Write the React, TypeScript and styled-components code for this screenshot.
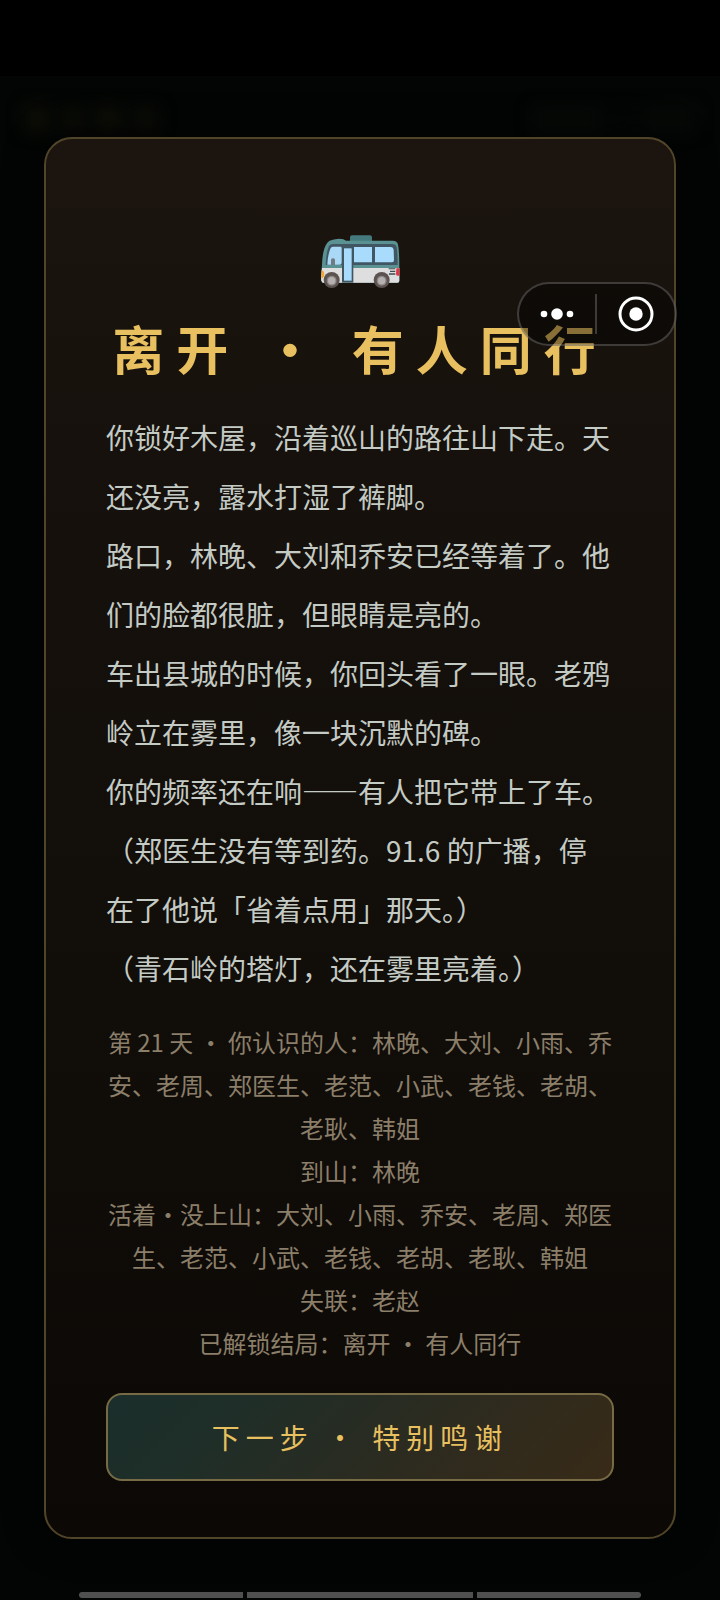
import React from 'react';
import styled, { createGlobalStyle } from 'styled-components';

const GlobalStyle = createGlobalStyle`
  *, *::before, *::after { box-sizing: border-box; }
  body {
    margin: 0;
    background: #000;
    font-family: "Noto Sans CJK SC", "Noto Sans", sans-serif;
  }
`;

const Page = styled.div`
  position: relative;
  display: flex;
  flex-direction: column;
  min-height: 100vh;
  background: #030504;
`;

const StatusBar = styled.div`
  flex: none;
  height: 76px;
  background: #000;
`;

const Scene = styled.main`
  position: relative;
  flex: 1;
  display: flex;
  align-items: center;
  padding: 60px 44px;
`;

const Backdrop = styled.div`
  position: absolute;
  inset: 30px 24px auto;
  display: flex;
  justify-content: space-between;
  filter: blur(8px);
`;

const GhostGroup = styled.div`
  display: flex;
  gap: 10px;
`;

const Ghost = styled.span<{ $width: number; $color: string }>`
  width: ${(p) => p.$width}px;
  height: 26px;
  background: ${(p) => p.$color};
`;

const Panel = styled.section`
  position: relative;
  width: 100%;
  padding: 56px 60px;
  border: 2px solid #514529;
  border-radius: 28px;
  background: linear-gradient(180deg, #1c150f 0%, #16110c 22%, #120e0a 55%, #0c0805 100%);
  box-shadow: 0 0 40px rgba(0, 0, 0, 0.4);
`;

const Illustration = styled.div`
  display: flex;
  justify-content: center;
  padding: 39px 0 20px;
`;

const Title = styled.h1`
  margin: 0 0 22px;
  font-size: 52px;
  line-height: 76px;
  font-weight: 700;
  letter-spacing: 12px;
  text-align: center;
  white-space: nowrap;
  color: #e8c060;
`;

const Story = styled.div`
  margin-bottom: 22px;
  font-size: 28px;
  line-height: 59px;
  color: #c4cac4;
`;

const Summary = styled.div`
  margin-bottom: 29px;
  font-size: 24px;
  line-height: 43px;
  text-align: center;
  color: #8b7f6a;
`;

const Line = styled.p`
  margin: 0;
`;

const NextButton = styled.button`
  display: block;
  width: 100%;
  height: 88px;
  padding: 0;
  border: 2px solid #776b45;
  border-radius: 16px;
  background: linear-gradient(135deg, #1a2e2b 0%, #1f2e28 25%, #2c2b20 60%, #382a17 100%);
  color: #e8c060;
  font: inherit;
  font-size: 28px;
  letter-spacing: 6px;
  cursor: pointer;
`;

const Capsule = styled.div`
  position: absolute;
  top: 282px;
  right: 43px;
  display: grid;
  grid-template-columns: 76px 2px 1fr;
  align-items: center;
  width: 160px;
  height: 64px;
  border: 2px solid rgba(255, 255, 255, 0.2);
  border-radius: 32px;
  background: rgba(0, 0, 0, 0.42);
`;

const CapsuleButton = styled.button`
  display: flex;
  justify-content: center;
  align-items: center;
  height: 100%;
  padding: 0;
  border: 0;
  background: none;
  cursor: pointer;
`;

const Divider = styled.span`
  height: 40px;
  background: rgba(255, 255, 255, 0.2);
`;

const NavHints = styled.div`
  position: absolute;
  left: 11%;
  right: 11%;
  bottom: 2px;
  display: flex;
  gap: 4px;
  border-radius: 3px;
  overflow: hidden;
`;

const NavHint = styled.span<{ $grow: number }>`
  flex: ${(p) => p.$grow} 1 0;
  height: 6px;
  background: #4f504f;
`;

const Wheel = ({ x }: { x: number }) => (
  <g>
    <circle cx={x} cy="178" r="24" fill="#5c5350" />
    <circle cx={x} cy="180" r="15" fill="#8b8583" />
    <circle cx={x} cy="180" r="11" fill="#b5b1b0" />
  </g>
);

const Bus = () => (
  <svg width="80" height="56" viewBox="60 40 240 168" aria-hidden="true">
    <path d="M150 62V50q0-6 6-6h54q6 0 6 6v12z" fill="#447a7d" />
    <path d="M68 186q-5-2-5-12l3-42c1-30 6-54 16-66 6-8 18-11 36-12q14 0 20 6h140q14 0 16 12 4 18 4 70v38q0 6-6 6z" fill="#5a9293" />
    <path d="M66 142H298v38q0 6-6 6H68q-5-2-5-12z" fill="#dedede" />
    <path d="M86 78q3-8 14-8h176q12 0 14 10 3 16 3 53H77q1-36 9-55z" fill="#405763" />
    <path d="M91 84q2-6 8-6h22q4 0 4 4v44q0 6-6 6H82q1-28 9-48z" fill="#a9d9f6" />
    <path d="M162 79h54v46h-54zM225 79h48q7 0 8 8l1 32q0 6-6 6h-51z" fill="#a9dcfc" />
    <path d="M126 72h34v114h-34z" fill="#405763" />
    <path d="M132 83h23v97h-23z" fill="#a9dcfc" />
    <rect x="93" y="113" width="12" height="24" rx="5" fill="#727b80" />
    <path d="M82 133h44v7H76z" fill="#5a9293" />
    <path d="M266 143h20v3h-20zm4 7h16v4h-16zm-3 8h19v4h-19z" fill="#414c51" />
    <path d="M289 143h9v22h-5q-5 0-5-5z" fill="#e33442" />
    <path d="M65 147q8 4 8 14t-9 13z" fill="#f5a735" />
    <Wheel x={95} />
    <Wheel x={245} />
  </svg>
);

const story = [
  '你锁好木屋，沿着巡山的路往山下走。天还没亮，露水打湿了裤脚。',
  '路口，林晚、大刘和乔安已经等着了。他们的脸都很脏，但眼睛是亮的。',
  '车出县城的时候，你回头看了一眼。老鸦岭立在雾里，像一块沉默的碑。',
  '你的频率还在响——有人把它带上了车。',
  '（郑医生没有等到药。91.6 的广播，停在了他说「省着点用」那天。）',
  '（青石岭的塔灯，还在雾里亮着。）',
];

const summary = [
  '第 21 天 · 你认识的人：林晚、大刘、小雨、乔安、老周、郑医生、老范、小武、老钱、老胡、老耿、韩姐',
  '到山：林晚',
  '活着·没上山：大刘、小雨、乔安、老周、郑医生、老范、小武、老钱、老胡、老耿、韩姐',
  '失联：老赵',
  '已解锁结局：离开 · 有人同行',
];

export default function App() {
  return (
    <Page lang="zh-CN">
      <GlobalStyle />
      <StatusBar />
      <Scene>
        <Backdrop aria-hidden="true">
          <GhostGroup>
            <Ghost $width={26} $color="#0d0e07" />
            <Ghost $width={26} $color="#0b0c07" />
            <Ghost $width={26} $color="#0d0e07" />
            <Ghost $width={26} $color="#0b0c07" />
          </GhostGroup>
          <GhostGroup>
            <Ghost $width={70} $color="#070907" />
            <Ghost $width={20} $color="#040605" />
            <Ghost $width={54} $color="#070907" />
          </GhostGroup>
        </Backdrop>
        <Panel>
          <Illustration>
            <Bus />
          </Illustration>
          <Title>离开 · 有人同行</Title>
          <Story>
            {story.map((text) => (
              <Line key={text}>{text}</Line>
            ))}
          </Story>
          <Summary>
            {summary.map((text) => (
              <Line key={text}>{text}</Line>
            ))}
          </Summary>
          <NextButton type="button">下一步 · 特别鸣谢</NextButton>
        </Panel>
      </Scene>
      <Capsule>
        <CapsuleButton type="button" aria-label="更多">
          <svg width="34" height="12" viewBox="0 0 34 12" fill="#fff">
            <circle cx="4" cy="6" r="3.3" />
            <circle cx="17" cy="6" r="5.8" />
            <circle cx="30" cy="6" r="3.3" />
          </svg>
        </CapsuleButton>
        <Divider />
        <CapsuleButton type="button" aria-label="关闭">
          <svg width="36" height="36" viewBox="0 0 36 36">
            <circle cx="18" cy="18" r="16" fill="none" stroke="#fff" strokeWidth="3" />
            <circle cx="18" cy="18" r="6.7" fill="#fff" />
          </svg>
        </CapsuleButton>
      </Capsule>
      <NavHints aria-hidden="true">
        <NavHint $grow={164} />
        <NavHint $grow={226} />
        <NavHint $grow={164} />
      </NavHints>
    </Page>
  );
}
